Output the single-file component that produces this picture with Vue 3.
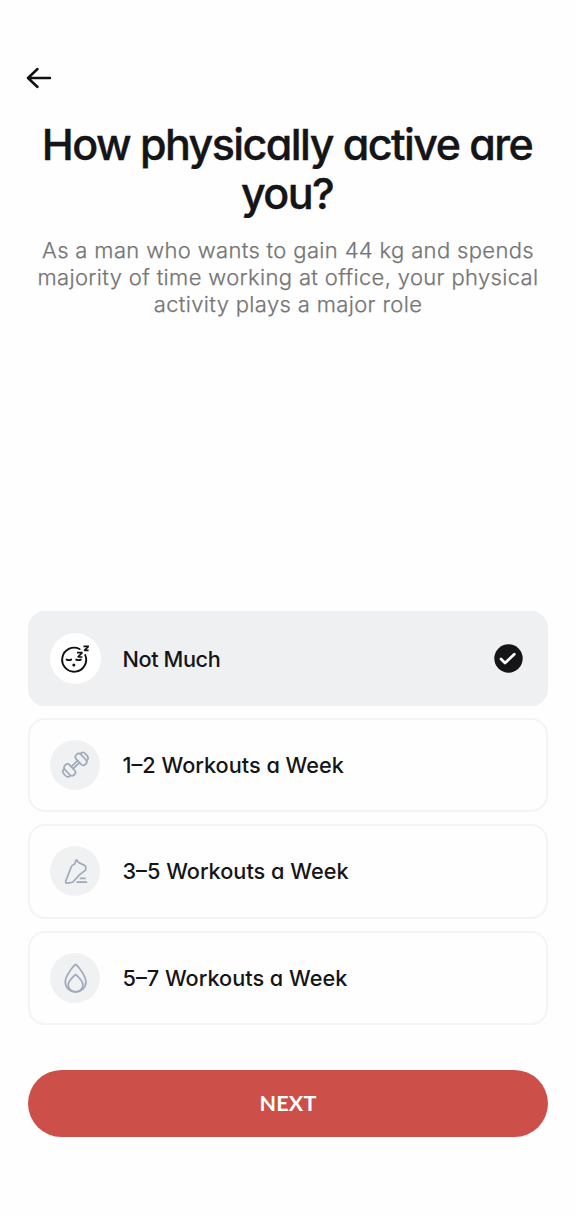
<script setup>
import { ref } from 'vue'

const selected = ref('sleep')
const options = [
  { icon: 'sleep', label: 'Not Much' },
  { icon: 'dumbbell', label: '1–2 Workouts a Week' },
  { icon: 'shoe', label: '3–5 Workouts a Week' },
  { icon: 'flame', label: '5–7 Workouts a Week' },
]
</script>

<template>
  <main class="screen">
    <button class="back" aria-label="Back">
      <svg width="40" height="40" viewBox="0 0 40 40">
        <path d="M30 18H8M17.5 9L8 18l9.5 9" />
      </svg>
    </button>

    <h1 class="title"><span class="line">How physically active are</span><span class="line">you?</span></h1>
    <p class="subtitle">
      <span class="line">As a man who wants to gain 44 kg and spends</span>
      <span class="line">majority of time working at office, your physical</span>
      <span class="line">activity plays a major role</span>
    </p>

    <div class="options">
      <button
        v-for="option in options"
        :key="option.icon"
        class="option"
        :class="[option.icon, { selected: selected === option.icon }]"
        @click="selected = option.icon"
      >
        <span class="badge">
          <svg v-if="option.icon === 'sleep'" width="60" height="60" viewBox="0.8 0 60 60">
            <path class="face" d="M34.4 21A12 12 0 1 0 40 27" />
            <path class="face" d="M21.4 31.6q2.3 1.1 4.6 0M31 31.6q2.3 1.1 4.6 0" />
            <circle class="dot" cx="28.6" cy="37" r="1.5" />
            <path class="zed" d="M31.8 24.6h4.9v.6L32.6 29h4.6M38.3 18.4h4.6v.6L39 22.4h4.4" />
          </svg>
          <svg v-else-if="option.icon === 'dumbbell'" width="60" height="60" viewBox="0 0 60 60">
            <g transform="translate(30.4 29.7) rotate(-43)">
              <path d="M-4.4 -1.4H4.4M-4.4 1.4H4.4" />
              <rect x="-11" y="-6.6" width="6.6" height="13.2" rx="3.1" />
              <rect x="4.4" y="-6.6" width="6.6" height="13.2" rx="3.1" />
              <path d="M-11 -4.6C-14.4 -5-14.8 -2.5-14.8 0s.4 5 3.8 4.6M11 -4.6C14.4 -5 14.8 -2.5 14.8 0s-.4 5-3.8 4.6" />
            </g>
          </svg>
          <svg v-else-if="option.icon === 'shoe'" width="60" height="60" viewBox="0 0 60 60">
            <path d="M31 19.2q.8-.6 1.2.3.5 1.6 1.8 2.2l5.4 2.6q1.6.8 1.4 2.4l-.1 1.6q-.1 1-1 1.6l-4.4 3.2q-1 .7-1.7 1.6l-5.2 5.8q-.7.8-1.8 1l-4.2.7q-2.4.2-1.6-2.2l5.4-14q.7-1.9 2.3-2.3 2-.6 1.9-2.3 0-1.4.6-2.2zM35.4 37.3H40M32.2 41.2h9.3" />
          </svg>
          <svg v-else width="60" height="60" viewBox="0 0 60 60">
            <path d="M30.1 16.7C27.3 19.4 20.3 28 20.3 34.3a10.2 9.6 0 0 0 20.6 0C40.9 28 33.9 19.4 31.1 16.7q-.5-.4-1 0z" />
            <path d="M30.3 26.6c-3.3 3-7.1 7-7.1 10.3 0 3.9 3.4 7 7.4 7s7.4-3.1 7.4-7c0-3.3-3.8-7.3-7.1-10.3q-.3-.3-.6 0z" />
          </svg>
        </span>
        <span class="label">{{ option.label }}</span>
        <svg v-if="selected === option.icon" class="check" width="29" height="29" viewBox="0 0 29 29">
          <circle cx="14.5" cy="14.5" r="14.2" />
          <path d="M7 15l4 4L20.3 10.2" />
        </svg>
      </button>
    </div>

    <button class="next"><span>NEXT</span></button>
  </main>
</template>

<style>
body {
  margin: 0;
  background: #fefefe;
}
</style>

<style scoped>
.screen {
  box-sizing: border-box;
  display: flex;
  flex-direction: column;
  width: 576px;
  height: 1216px;
  padding: 60px 28px 0;
  background: #fefefe;
  color: #151517;
  font-family: Inter, "Liberation Sans", sans-serif;
}

button {
  padding: 0;
  border: 0;
  background: none;
  color: inherit;
  font: inherit;
}

.back {
  width: 40px;
  height: 40px;
  margin-left: -8px;
}

svg {
  display: block;
  fill: none;
  stroke-linecap: round;
  stroke-linejoin: round;
}

.back svg {
  stroke: #111;
  stroke-width: 2.5;
}

.line {
  display: block;
  white-space: nowrap;
}

.title {
  margin: 20px 0 0;
  padding-right: 2px;
  font-size: 43px;
  font-weight: 500;
  line-height: 49px;
  text-align: center;
  letter-spacing: -1.57px;
  font-feature-settings: "cv11";
  -webkit-text-stroke: 0.4px #151517;
}

.subtitle {
  margin: 19px 0 0;
  color: #757575;
  font-size: 22px;
  font-weight: 300;
  line-height: 27px;
  text-align: center;
  letter-spacing: 0.35px;
  -webkit-text-stroke: 0.25px #757575;
}

.options {
  display: flex;
  flex-direction: column;
  gap: 12px;
  margin-top: 293.2px;
}

.option {
  box-sizing: border-box;
  display: flex;
  align-items: center;
  height: 94.5px;
  padding: 0 23px 0 20px;
  border: 2px solid #f3f4f5;
  border-radius: 17px;
  text-align: left;
}

.option.selected {
  border-color: #eff0f2;
  background: #eff0f2;
}

.badge {
  display: flex;
  flex: none;
  align-items: center;
  justify-content: center;
  width: 50px;
  height: 50px;
  border-radius: 50%;
  background: #eff1f3;
}

.selected .badge {
  width: 51px;
  height: 51px;
  margin-right: -1px;
  background: #fff;
}

.badge svg {
  flex: none;
  stroke: #a0a8b9;
  stroke-width: 1.7;
}

.badge .face {
  stroke: #111;
  stroke-width: 1.9;
}

.badge .dot {
  fill: #111;
  stroke: none;
}

.badge .zed {
  stroke: #111;
  stroke-width: 1.6;
  stroke-linecap: butt;
  stroke-linejoin: miter;
  stroke-miterlimit: 2;
}

.label {
  margin-left: 22.5px;
  font-size: 21.7px;
  font-weight: 500;
  line-height: 28px;
  white-space: nowrap;
  font-feature-settings: "cv11";
}

.selected .label {
  padding-top: 1px;
  letter-spacing: -0.4px;
}

.check {
  margin-left: auto;
}

.check circle {
  fill: #151517;
}

.check path {
  stroke: #fff;
  stroke-width: 2.7;
}

.next {
  height: 67px;
  margin-top: 44.4px;
  border-radius: 34px;
  background: #cd4f4a;
  color: #fff;
  font-family: Lato, "Liberation Sans", sans-serif;
  font-size: 21.5px;
  font-weight: 700;
  letter-spacing: 0.2px;
}
</style>
